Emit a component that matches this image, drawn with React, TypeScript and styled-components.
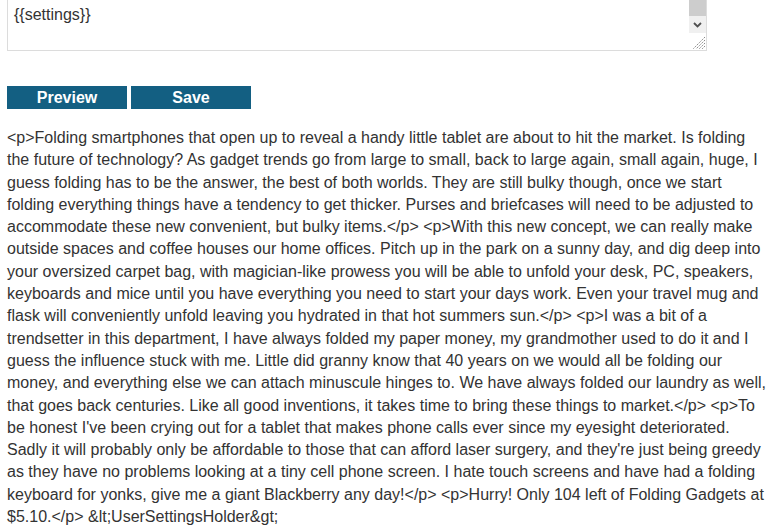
import React from "react";
import styled, { createGlobalStyle } from "styled-components";

const Global = createGlobalStyle`
  html, body { margin: 0; padding: 0; background: #ffffff; overflow: hidden; }
  body { font-family: "Liberation Sans", Arial, sans-serif; color: #333333; }
`;

const Page = styled.div`
  padding: 0 4px 0 7px;
  width: 760px;
`;

const Editor = styled.div`
  box-sizing: border-box;
  width: 700px;
  height: 161px;
  margin-top: -110px;
  border: 1px solid #dcdcdc;
  display: flex;
  background: #fff;
`;

const EditorText = styled.textarea`
  flex: 1;
  border: none;
  outline: none;
  resize: none;
  overflow: hidden;
  margin: 0;
  padding: 115px 6px 0 6px;
  font-family: "Liberation Sans", Arial, sans-serif;
  font-size: 16px;
  line-height: 18px;
  color: #333333;
  background: transparent;
`;

const Scrollbar = styled.div`
  width: 17px;
  display: flex;
  flex-direction: column;
  background: #f0f0f0;
`;

const Thumb = styled.div`
  flex: 1;
  background: #cdcdcd;
`;

const ArrowButton = styled.div`
  height: 17px;
  display: flex;
  align-items: center;
  justify-content: center;
  background: #f0f0f0;
`;

const Corner = styled.div`
  height: 17px;
  background: #ffffff;
  display: flex;
  align-items: flex-end;
  justify-content: flex-end;
`;

const ButtonRow = styled.div`
  display: flex;
  gap: 4px;
  margin-top: 35px;
`;

const Button = styled.button`
  width: 120px;
  height: 23px;
  border: none;
  padding: 0;
  background: #135f82;
  color: #ffffff;
  font-family: "Liberation Sans", Arial, sans-serif;
  font-weight: bold;
  font-size: 16px;
  line-height: 23px;
  cursor: pointer;
`;

const Body = styled.div`
  margin-top: 18px;
  font-size: 16px;
  line-height: 22.3px;
  color: #333333;
`;

const text =
  "<p>Folding smartphones that open up to reveal a handy little tablet are about to hit the market. Is folding the future of technology? As gadget trends go from large to small, back to large again, small again, huge, I guess folding has to be the answer, the best of both worlds. They are still bulky though, once we start folding everything things have a tendency to get thicker. Purses and briefcases will need to be adjusted to accommodate these new convenient, but bulky items.</p> <p>With this new concept, we can really make outside spaces and coffee houses our home offices. Pitch up in the park on a sunny day, and dig deep into your oversized carpet bag, with magician-like prowess you will be able to unfold your desk, PC, speakers, keyboards and mice until you have everything you need to start your days work. Even your travel mug and flask will conveniently unfold leaving you hydrated in that hot summers sun.</p> <p>I was a bit of a trendsetter in this department, I have always folded my paper money, my grandmother used to do it and I guess the influence stuck with me. Little did granny know that 40 years on we would all be folding our money, and everything else we can attach minuscule hinges to. We have always folded our laundry as well, that goes back centuries. Like all good inventions, it takes time to bring these things to market.</p> <p>To be honest I've been crying out for a tablet that makes phone calls ever since my eyesight deteriorated. Sadly it will probably only be affordable to those that can afford laser surgery, and they're just being greedy as they have no problems looking at a tiny cell phone screen. I hate touch screens and have had a folding keyboard for yonks, give me a giant Blackberry any day!</p> <p>Hurry! Only 104 left of Folding Gadgets at $5.10.</p> &lt;UserSettingsHolder&gt;";

export default function App() {
  return (
    <Page>
      <Global />
      <Editor>
        <EditorText readOnly value="{{settings}}" />
        <Scrollbar>
          <Thumb />
          <ArrowButton>
            <svg width="9" height="6" viewBox="0 0 9 6">
              <path d="M1 1 L4.5 4.5 L8 1" fill="none" stroke="#505050" strokeWidth="1.8" />
            </svg>
          </ArrowButton>
          <Corner>
            <svg width="17" height="17" viewBox="0 0 17 17">
              <path
                d="M16 4 L4 16 M16 7 L7 16 M16 10 L10 16 M16 13 L13 16"
                stroke="#8a8a8a"
                strokeWidth="1"
                strokeDasharray="1.5 1"
              />
            </svg>
          </Corner>
        </Scrollbar>
      </Editor>
      <ButtonRow>
        <Button>Preview</Button>
        <Button>Save</Button>
      </ButtonRow>
      <Body>{text}</Body>
    </Page>
  );
}
